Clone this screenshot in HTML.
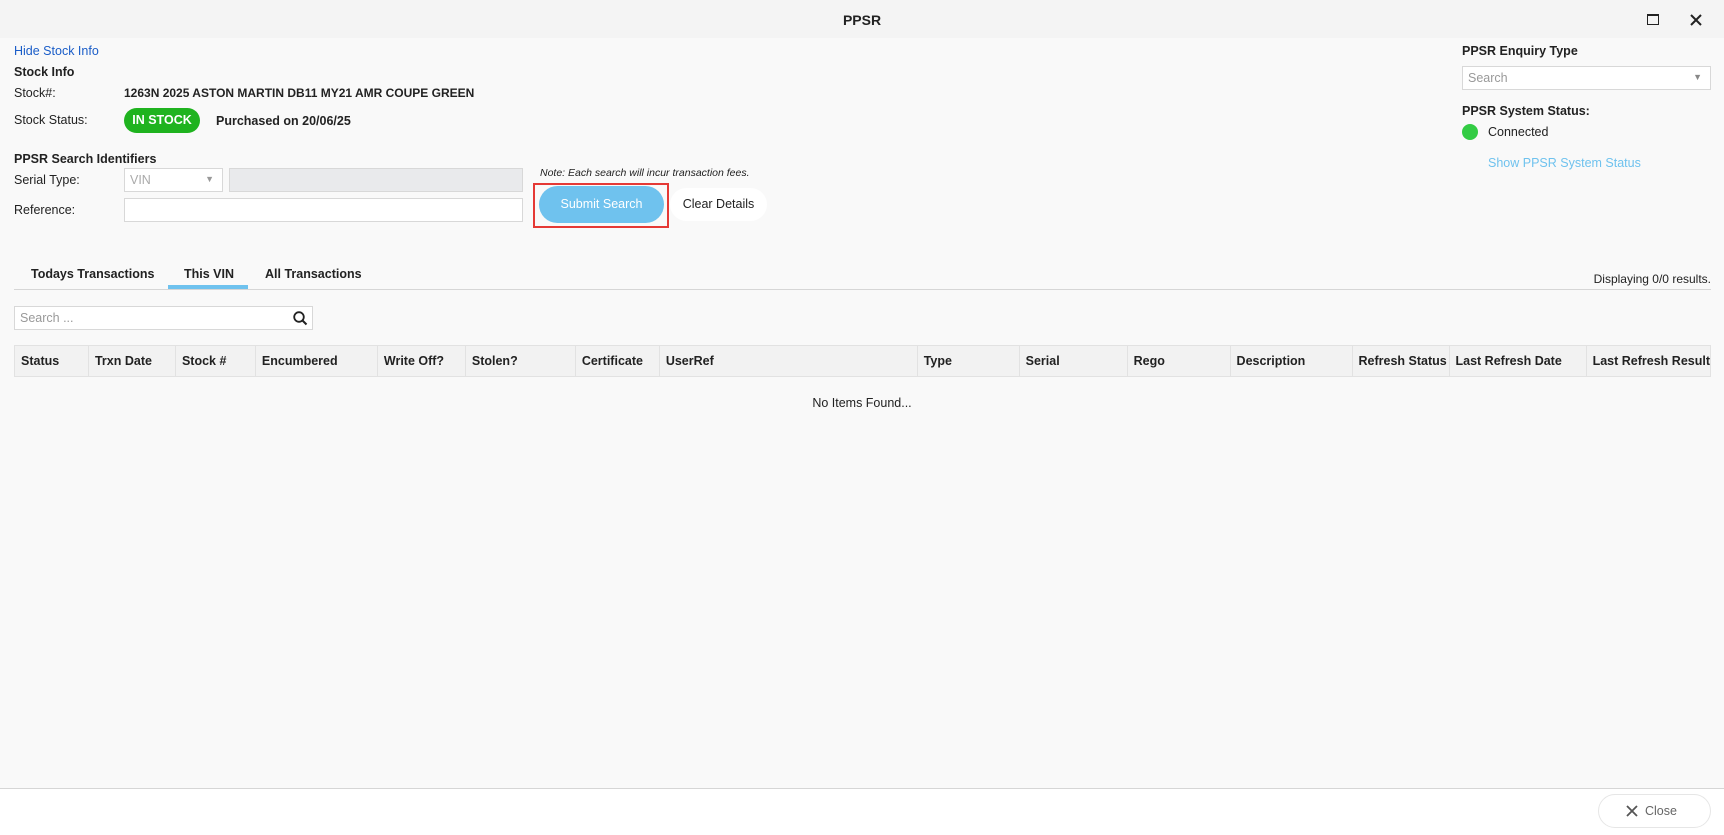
<!DOCTYPE html>
<html><head><style>
*{box-sizing:border-box;margin:0;padding:0}
body{width:1724px;height:835px;background:#f9f9f9;font-family:"Liberation Sans",sans-serif;font-size:12.5px;color:#222;position:relative;overflow:hidden}
.a{position:absolute;white-space:nowrap}
.b{font-weight:bold}
.title{left:0;top:0;width:1724px;height:38px;background:#f4f4f4}
.inp{position:absolute;border:1px solid #d8d8d8;background:#fff}
th{font-weight:bold;text-align:left;padding-left:6px;border-left:1px solid #e2e2e2;font-size:12.5px;height:31px}
th:first-child{border-left:none}
</style></head><body>
<div class="a title"></div>
<div class="a b" style="left:0;width:1724px;text-align:center;top:12px;font-size:14px">PPSR</div>
<div class="a" style="left:1647px;top:14px;width:12px;height:11px;border:1.3px solid #222;border-top-width:2.5px"></div>
<svg class="a" style="left:1690px;top:14px" width="12" height="12"><path d="M1 1L11 11M11 1L1 11" stroke="#222" stroke-width="2"/></svg>

<div class="a" style="left:14px;top:44px;color:#1a5dc8">Hide Stock Info</div>
<div class="a b" style="left:14px;top:65px">Stock Info</div>
<div class="a" style="left:14px;top:86px">Stock#:</div>
<div class="a b" style="left:124px;top:86px;font-size:12px">1263N 2025 ASTON MARTIN DB11 MY21 AMR COUPE GREEN</div>
<div class="a" style="left:14px;top:113px">Stock Status:</div>
<div class="a b" style="left:124px;top:108px;width:76px;height:25px;border-radius:13px;background:#1fb31f;color:#fff;text-align:center;line-height:25px">IN STOCK</div>
<div class="a b" style="left:216px;top:114px">Purchased on 20/06/25</div>

<div class="a b" style="left:14px;top:152px">PPSR Search Identifiers</div>
<div class="a" style="left:14px;top:173px">Serial Type:</div>
<div class="inp" style="left:124px;top:168px;width:99px;height:24px;color:#aaa;padding:4px 5px">VIN<span style="position:absolute;right:8px;top:5px;font-size:9px;color:#999">▼</span></div>
<div class="inp" style="left:229px;top:168px;width:294px;height:24px;background:#e9eaec"></div>
<div class="a" style="left:14px;top:203px">Reference:</div>
<div class="inp" style="left:124px;top:198px;width:399px;height:24px"></div>
<div class="a" style="left:540px;top:167px;font-style:italic;font-size:10.5px">Note: Each search will incur transaction fees.</div>
<div class="a" style="left:533px;top:183px;width:136px;height:45px;border:2px solid #e53935"></div>
<div class="a" style="left:539px;top:186px;width:125px;height:37px;border-radius:19px;background:#6fc2ee;color:#fff;text-align:center;line-height:37px">Submit Search</div>
<div class="a" style="left:670px;top:188px;width:97px;height:33px;border-radius:17px;background:#fff;text-align:center;line-height:33px">Clear Details</div>

<div class="a b" style="left:1462px;top:44px">PPSR Enquiry Type</div>
<div class="inp" style="left:1462px;top:66px;width:249px;height:24px;color:#999;padding:4px 5px">Search<span style="position:absolute;right:8px;top:5px;font-size:9px;color:#888">▼</span></div>
<div class="a b" style="left:1462px;top:104px">PPSR System Status:</div>
<div class="a" style="left:1462px;top:124px;width:16px;height:16px;border-radius:50%;background:#33cc44"></div>
<div class="a" style="left:1488px;top:125px">Connected</div>
<div class="a" style="left:1488px;top:156px;color:#6fc2ee">Show PPSR System Status</div>

<div class="a b" style="left:31px;top:267px">Todays Transactions</div>
<div class="a b" style="left:184px;top:267px">This VIN</div>
<div class="a b" style="left:265px;top:267px">All Transactions</div>
<div class="a" style="left:168px;top:285px;width:80px;height:4px;background:#6fc2ee"></div>
<div class="a" style="left:14px;top:289px;width:1697px;height:1px;background:#d6d6d6"></div>
<div class="a" style="right:13px;top:272px;font-size:12px">Displaying 0/0 results.</div>

<div class="inp" style="left:14px;top:306px;width:299px;height:24px;color:#999;padding:4px 5px">Search ...</div>
<svg class="a" style="left:293px;top:311px" width="15" height="15"><circle cx="6" cy="6" r="4.8" fill="none" stroke="#222" stroke-width="1.8"/><path d="M9.5 9.5L13.5 13.5" stroke="#222" stroke-width="2"/></svg>

<table class="a" style="left:14px;top:345px;width:1697px;border-collapse:collapse;background:#f2f2f2;border:1px solid #e2e2e2">
<tr><th style="width:74px">Status</th><th style="width:87px">Trxn Date</th><th style="width:80px">Stock #</th><th style="width:122px">Encumbered</th><th style="width:88px">Write Off?</th><th style="width:110px">Stolen?</th><th style="width:84px">Certificate</th><th style="width:258px">UserRef</th><th style="width:102px">Type</th><th style="width:108px">Serial</th><th style="width:103px">Rego</th><th style="width:122px">Description</th><th style="width:97px">Refresh Status</th><th style="width:137px">Last Refresh Date</th><th>Last Refresh Result</th></tr></table>
<div class="a" style="left:0;width:1724px;text-align:center;top:396px">No Items Found...</div>

<div class="a" style="left:0;top:788px;width:1724px;height:47px;background:#fff;border-top:1px solid #d6d6d6"></div>
<div class="a" style="left:1598px;top:794px;width:113px;height:34px;border:1px solid #e6e6e6;border-radius:17px;background:#fff;color:#666;line-height:32px;padding-left:46px">Close</div>
<svg class="a" style="left:1626px;top:805px" width="12" height="12"><path d="M1 1L11 11M11 1L1 11" stroke="#555" stroke-width="1.8"/></svg>
</body></html>
